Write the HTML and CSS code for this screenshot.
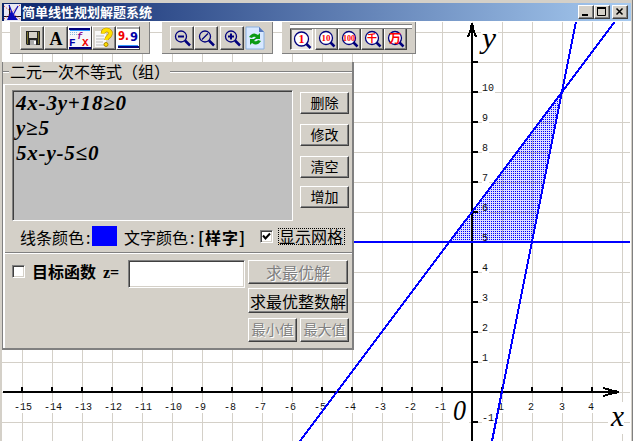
FILE: index.html
```html
<!DOCTYPE html>
<html lang="zh-CN">
<head>
<meta charset="utf-8">
<title>简单线性规划解题系统</title>
<link rel="stylesheet" href="styles.css">
</head>
<body>
<div class="window">
  <header class="titlebar">
    <svg class="app-icon" width="17" height="17" viewBox="0 0 17 17"><rect width="17" height="17" fill="#e8e8f4"/><path d="M5.500 1v15M0 12.500h17" stroke="#111"/><path d="M0 2l17 14M16 1L0 15" stroke="#e02020" stroke-dasharray="1 1.500"/><path d="M7 7L3 16h11z" fill="#0808b8"/><path d="M5 1l4 10 5-9" fill="none" stroke="#1010c0" stroke-width="1.200"/></svg>
    <h1>简单线性规划解题系统</h1>
    <div class="controls">
      <span class="ctl"><svg width="14" height="12"><path d="M3 9h6" stroke="#000" stroke-width="2"/></svg></span>
      <span class="ctl"><svg width="14" height="12"><path d="M2.500 2v7.500h8V2" fill="none" stroke="#000"/><path d="M2 2h9" stroke="#000" stroke-width="2"/></svg></span>
      <span class="ctl close"><svg width="14" height="12"><path d="M3.500 2.500l6 6M9.500 2.500l-6 6" stroke="#000" stroke-width="1.500"/></svg></span>
    </div>
  </header>
  <main class="workspace">
    <svg class="plot" width="629" height="420" viewBox="2 21 629 420">
      <defs>
        <pattern id="grid" width="30" height="30" x="22" y="32" patternUnits="userSpaceOnUse"><path d="M0 .5h30M.5 0v30" stroke="#d4d0c8"/></pattern>
        <pattern id="dots" width="10" height="2" patternUnits="userSpaceOnUse"><path d="M1 1h1v1H1zM3 1h1v1H3zM5 1h1v1H5zM7 1h1v1H7zM9 1h1v1H9z" fill="#0000ff"/></pattern>
      </defs>
      <rect x="2" y="21" width="629" height="420" fill="#fff"/>
      <rect x="2" y="22" width="628" height="419" fill="url(#grid)"/>
      <g class="mask" fill="#fff">
        <path d="M14 402h19v11H14zM44 402h19v11H44zM74 402h19v11H74zM104 402h19v11h-19zM134 402h19v11h-19zM164 402h19v11h-19zM194 402h13v11h-13zM224 402h13v11h-13zM254 402h13v11h-13zM284 402h13v11h-13zM314 402h13v11h-13zM344 402h13v11h-13zM374 402h13v11h-13zM404 402h13v11h-13zM434 402h13v11h-13zM498 402h7v11h-7zM528 402h7v11h-7zM558 402h7v11h-7zM588 402h7v11h-7z"/>
        <path d="M482 81h13v12h-13zM482 111h7v12h-7zM482 141h7v12h-7zM482 171h7v12h-7zM482 201h7v12h-7zM482 261h7v12h-7zM482 291h7v12h-7zM482 321h7v12h-7zM482 351h7v12h-7zM482 416h13v11h-13zM481 26h17v32h-17zM608 402h16v32h-16zM450 398h19v30h-19z"/>
      </g>
      <path d="M450 242L562 93l-30 149z" fill="#0000ff" fill-opacity=".12"/>
      <path d="M450 242L562 93l-30 149z" fill="url(#dots)"/>
      <g class="ticks">
        <path d="M22 387v5M52 387v5M82 387v5M112 387v5M142 387v5M172 387v5M202 387v5M232 387v5M262 387v5M292 387v5M322 387v5M352 387v5M382 387v5M412 387v5M442 387v5M502 387v5M532 387v5M562 387v5M592 387v5"/>
        <path d="M472 62h6M472 92h6M472 122h6M472 152h6M472 182h6M472 212h6M472 242h6M472 272h6M472 302h6M472 332h6M472 362h6M472 422h6"/>
        <path d="M3 392h616M472 23v418"/>
        <path d="M603 388l9 2.500 7 1.500-7 1.500-9 2.500M468 37l2.500-7 1.500-7 1.500 7 2.500 7" fill="none"/>
      </g>
      <g class="num">
        <text x="14" y="410">-15</text><text x="44" y="410">-14</text><text x="74" y="410">-13</text><text x="104" y="410">-12</text><text x="134" y="410">-11</text><text x="164" y="410">-10</text><text x="194" y="410">-9</text><text x="224" y="410">-8</text><text x="254" y="410">-7</text><text x="284" y="410">-6</text><text x="314" y="410">-5</text><text x="344" y="410">-4</text><text x="374" y="410">-3</text><text x="404" y="410">-2</text><text x="434" y="410">-1</text><text x="498" y="410">1</text><text x="528" y="410">2</text><text x="559" y="410">3</text><text x="588" y="410">4</text>
        <text x="482" y="91">10</text><text x="482" y="121">9</text><text x="482" y="151">8</text><text x="482" y="181">7</text><text x="482" y="211">6</text><text x="482" y="241">5</text><text x="482" y="271">4</text><text x="482" y="301">3</text><text x="482" y="331">2</text><text x="482" y="361">1</text><text x="482" y="421">-1</text>
      </g>
      <g class="axis-name"><text x="482" y="48" textLength="14" lengthAdjust="spacingAndGlyphs">y</text><text x="611" y="426" textLength="13" lengthAdjust="spacingAndGlyphs">x</text><text x="453" y="420" textLength="13" lengthAdjust="spacingAndGlyphs">0</text></g>
      <path class="lines" d="M300 441L614.500 22M492 441L576 22M2 242h628"/>
    </svg>

    <div class="toolbar file-tools">
      <span class="tool"><svg width="22" height="22"><path d="M5 4h14v14H6l-1-1z" fill="#222"/><path d="M8 5h8v6H8z" fill="#d4d0c8"/><path d="M6.500 5v12M17.500 5v12" stroke="#77702a"/><path d="M9 13h6v5H9z" fill="#aaa"/><path d="M13 14h2v3h-2z" fill="#fff"/></svg></span>
      <span class="tool letter">A</span>
      <span class="tool white-tool"><svg width="22" height="22"><rect width="22" height="22" fill="#f6f6fa"/><path d="M0 2h21" stroke="#00007c" stroke-width="2"/><path d="M1 3.500h20" stroke="#39f"/><path d="M1 5.500h8M1 7.500h7" stroke="#8bd" stroke-dasharray="1 1"/><path d="M0 21h22" stroke="#00007c" stroke-width="2"/><text x="0" y="19" class="fx blue">F</text><text x="8" y="12" class="fx f">f</text><text x="13" y="19" class="fx red">X</text></svg></span>
      <span class="tool"><svg width="22" height="22"><path d="M2 4h11v16H2z" fill="#f8f8f8"/><path d="M3 9h8M3 12h8M3 15h7M3 18h8" stroke="#bbb"/><path d="M10 6.500q0-3 3-3.500t4.500 2.500q0 3-2.500 4.500-1.500 1-1.500 3" fill="none" stroke="#b88a00" stroke-width="4.500"/><path d="M10 6.500q0-3 3-3.500t4.500 2.500q0 3-2.500 4.500-1.500 1-1.500 3" fill="none" stroke="#ffe000" stroke-width="3.300"/><circle cx="13" cy="17.500" r="2" fill="#ffe000" stroke="#a80"/></svg></span>
      <span class="tool white-tool"><svg width="22" height="22"><rect width="22" height="22" fill="#fff"/><path d="M0 1h22" stroke="#555"/><path d="M1 20h21" stroke="#00007c" stroke-width="2"/><path d="M1 18.500h20" stroke="#39f"/><text x="1" y="13" class="nine red" textLength="11" lengthAdjust="spacingAndGlyphs">9.</text><text x="13" y="14" class="nine blue" textLength="8" lengthAdjust="spacingAndGlyphs">9</text></svg></span>
    </div>

    <div class="toolbar zoom-tools">
      <span class="tool"><svg width="22" height="22"><circle cx="10" cy="9.500" r="5.500" class="lens"/><path d="M14 13.500l5 5" class="handle"/><path d="M7 9.500h6" class="mark"/></svg></span>
      <span class="tool"><svg width="22" height="22"><circle cx="10" cy="9.500" r="5.500" class="lens"/><path d="M14 13.500l5 5" class="handle"/><path d="M7 12.500l6-6" class="mark thin"/></svg></span>
      <span class="tool gap"><svg width="22" height="22"><circle cx="10" cy="9.500" r="5.500" class="lens"/><path d="M14 13.500l5 5" class="handle"/><path d="M7 9.500h6M10 6.500v6" class="mark"/></svg></span>
      <svg class="refresh" width="20" height="24"><path d="M1 1h13l5 5v17H1z" fill="#d8e8ff" stroke="#8ab0e0"/><path d="M14 1v5h5z" fill="#5676bb"/><path d="M4 11q4-6 9-2l2-2v6H9l2-2q-3-1-4 1zM16 15q-4 6-9 2l-2 2v-6h6l-2 2q3 1 4-1z" fill="#0a9a12"/></svg>
    </div>

    <div class="toolbar scale-tools">
      <span class="tool pressed"><svg width="22" height="22"><circle cx="10.500" cy="10" r="7" class="bulb"/><path d="M15.500 15l4 4" class="handle"/><text x="10.500" y="14" class="scale">1</text></svg></span>
      <span class="tool"><svg width="21" height="20"><circle cx="10" cy="9" r="6.500" class="bulb"/><path d="M14.500 13.500l4 4" class="handle"/><text x="10" y="12" class="scale small">10</text></svg></span>
      <span class="tool"><svg width="21" height="20"><circle cx="10" cy="9" r="6.500" class="bulb"/><path d="M14.500 13.500l4 4" class="handle"/><text x="10" y="12" class="scale small" textLength="12" lengthAdjust="spacingAndGlyphs">100</text></svg></span>
      <span class="tool"><svg width="21" height="20"><circle cx="10" cy="9" r="6.500" class="bulb"/><path d="M14.500 13.500l4 4" class="handle"/><text x="10" y="13" class="scale han">千</text></svg></span>
      <span class="tool"><svg width="21" height="20"><circle cx="10" cy="9" r="6.500" class="bulb"/><path d="M14.500 13.500l4 4" class="handle"/><text x="10" y="13.500" class="scale han wan">万</text></svg></span>
    </div>

    <section class="panel">
      <div class="legend"><h2>二元一次不等式（组）</h2></div>
      <div class="group">
        <div class="upper">
          <div class="list"><p>4x-3y+18≥0</p><p>y≥5</p><p>5x-y-5≤0</p></div>
          <div class="actions"><button>删除</button><button>修改</button><button>清空</button><button>增加</button></div>
        </div>
        <div class="options">
          <span class="label">线条颜色<i>:</i></span><span class="swatch"></span><span class="label second">文字颜色<i>:</i></span><b class="sample">[样字]</b>
          <span class="check"><svg width="9" height="9"><path d="M1 3.500l2.500 3L8 1.500" fill="none" stroke="#000" stroke-width="2"/></svg></span>
          <span class="grid-label">显示网格</span>
        </div>
        <div class="objective">
          <span class="check"></span><b class="goal">目标函数</b><b class="z">z=</b><input class="expr" type="text">
          <div class="solve">
            <button class="off wide">求最优解</button>
            <button class="wide main">求最优整数解</button>
            <button class="off half">最小值</button><button class="off half">最大值</button>
          </div>
        </div>
      </div>
    </section>
  </main>
</div>
</body>
</html>
```
FILE: styles.css
```css
* { box-sizing: border-box; }
body { margin: 0; overflow: hidden; font-family: "Liberation Sans", "Noto Sans CJK SC", sans-serif; color: #000; }
h1, h2, p { margin: 0; }
.window { width: 633px; height: 441px; padding: 3px 0 0 2px; background: #d4d0c8; border-right: 1px solid #808080; overflow: hidden; }
.titlebar { display: flex; width: 629px; height: 18px; align-items: center; background: linear-gradient(90deg, #0a246a, #a6caf0); padding: 0 3px 0 2px; }
.app-icon { width: 17px; height: 17px; }
.titlebar h1 { margin-left: 1px; flex: 1; color: #fff; font: bold 13px/18px "Noto Sans CJK SC", sans-serif; white-space: nowrap; }
.controls { display: flex; }
.ctl { display: flex; width: 16px; height: 14px; background: #d4d0c8; border: 1px solid; border-color: #fff #404040 #404040 #fff; box-shadow: inset -1px -1px #808080; }
.close { margin-left: 2px; }
.workspace { position: relative; width: 629px; height: 420px; }
.plot { display: block; }
.ticks { stroke: #000; stroke-width: 2; shape-rendering: crispEdges; }
.num { font: 10px "Liberation Mono", monospace; fill: #111; }
.axis-name { font: italic 30px "Liberation Serif", serif; }
.lines { stroke: #00f; stroke-width: 2; fill: none; shape-rendering: crispEdges; }

.toolbar { position: absolute; top: 1px; display: flex; height: 32px; background: #d4d0c8; border-right: 1px solid #808080; border-bottom: 1px solid #808080; }
.tool { display: flex; width: 24px; height: 24px; background: #d4d0c8; border: 1px solid; border-color: #fff #404040 #404040 #fff; box-shadow: inset -1px -1px #808080; overflow: hidden; }
.file-tools { left: 8px; width: 140px; padding: 4px 0 0 10px; }
.letter { justify-content: center; font: bold 18px/25px "Liberation Serif", serif; }
.fx { font: bold 11px "Liberation Mono", monospace; }
.fx.f { font-style: italic; font-size: 9px; fill: #808; }
.red { fill: #f00000; }
.blue { fill: #0000a8; }
.nine { font: bold 13px "DejaVu Sans", sans-serif; }
.zoom-tools { left: 160px; width: 111px; padding: 4px 0 0 8px; }
.tool.gap { margin-left: 2px; }
.refresh { margin-left: 1px; }
.lens, .bulb { fill: none; stroke: #00007c; stroke-width: 1.3; }
.bulb { fill: #fff; }
.handle { stroke: #00007c; stroke-width: 2.5; }
.mark { stroke: #00007c; stroke-width: 2; }
.mark.thin { stroke-width: 1.3; }
.scale-tools { left: 280px; width: 134px; padding: 6px 0 0 8px; }
.scale-tools::before { content: ""; position: absolute; left: 8px; top: 2px; width: 122px; height: 3px; border-top: 1px solid #808080; border-bottom: 1px solid #808080; background: #fff; }
.scale-tools .tool { width: 23px; height: 22px; }
.scale-tools .pressed { margin-right: 2px; border-color: #404040 #fff #fff #404040; box-shadow: inset 1px 1px #808080; background: #eae7e3; }
.scale { text-anchor: middle; font: bold 12px "Liberation Serif", serif; fill: #f00; }
.small { font-size: 9px; }
.han { font: bold 10px "Noto Sans CJK SC", sans-serif; }
.wan { font-size: 12px; }

.panel { position: absolute; left: 0; top: 41px; width: 352px; height: 288px; background: #d4d0c8; border-left: 1px solid #808080; border-right: 2px solid #808080; border-bottom: 2px solid #808080; }
.legend { display: flex; height: 22px; background: linear-gradient(#808080, #808080) 0 9px / 100% 1px no-repeat, linear-gradient(#fff, #fff) 0 10px / 100% 1px no-repeat; }
.legend h2 { margin-left: 6px; padding-left: 1px; width: 161px; background: #d4d0c8; font: 16px/19px "Noto Sans CJK SC", sans-serif; height: 21px; white-space: nowrap; }
.group { height: 264px; border-top: 1px solid #fff; border-left: 2px solid #fff; padding-top: 5px; }
.upper { display: flex; padding-left: 7px; height: 131px; }
.list { width: 281px; height: 131px; padding: 0 3px; border: 1px solid; border-color: #808080 #fff #fff #808080; box-shadow: inset 1px 1px #404040; background: #c0c0c0; }
.list p { font: italic bold 21px/25px "Liberation Serif", serif; letter-spacing: .8px; }
.actions { display: grid; grid-template-rows: 32px 32px 30px 22px; margin: 2px 0 0 7px; align-content: start; }
button { padding: 0; margin: 0; width: 49px; height: 22px; font: 14px/16px "Noto Sans CJK SC", sans-serif; background: #d4d0c8; border: 1px solid; border-color: #fff #404040 #404040 #fff; box-shadow: inset -1px -1px #808080; border-radius: 0; color: #000; white-space: nowrap; }
.actions button { padding-bottom: 2px; }
.options { display: flex; height: 32px; align-items: center; border-bottom: 1px solid #808080; box-shadow: 0 1px #fff; padding-left: 15px; }
.label { display: flex; width: 72px; font: 16px/20px "Noto Sans CJK SC", sans-serif; }
.label i { font-style: normal; margin-left: 2px; }
.swatch { width: 25px; height: 20px; background: #00f; margin-top: -2px; }
.second { margin-left: 7px; }
.sample { margin-left: 2px; width: 49px; font: bold 16px/20px "Noto Sans CJK SC", sans-serif; letter-spacing: 1px; white-space: nowrap; }
.check { flex: none; width: 13px; height: 13px; background: #fff; border: 1px solid; border-color: #808080 #fff #fff #808080; box-shadow: inset 1px 1px #404040, inset -1px -1px #d4d0c8; }
.options .check { margin-left: 13px; display: flex; padding: 1px; }
.grid-label { margin-left: 5px; width: 67px; height: 17px; border: 1px dotted #000; font: 16px/14px "Noto Sans CJK SC", sans-serif; }
.objective { display: flex; padding: 7px 0 0 7px; }
.objective .check { margin-top: 5px; }
.goal { margin-left: 7px; width: 71px; font: bold 16px/23px "Noto Sans CJK SC", sans-serif; }
.z { width: 25px; font: bold 16px/25px "Liberation Serif", serif; white-space: nowrap; }
.expr { width: 117px; height: 28px; padding: 2px; background: #fff; border: 1px solid; border-color: #808080 #fff #fff #808080; box-shadow: inset 1px 1px #404040, inset -1px -1px #d4d0c8; border-radius: 0; outline: 0; }
.solve { display: grid; grid-template-columns: 49px 49px; column-gap: 3px; grid-template-rows: 24px 25px 24px; row-gap: 4px; margin-left: 3px; }
.solve .wide { grid-column: 1 / 3; width: 100px; height: 24px; font-size: 16px; }
.solve .main { height: 25px; }
.solve .half { height: 24px; margin-top: 1px; padding-bottom: 2px; }
.solve .off { color: #808080; text-shadow: 1px 1px #fff; }
```
